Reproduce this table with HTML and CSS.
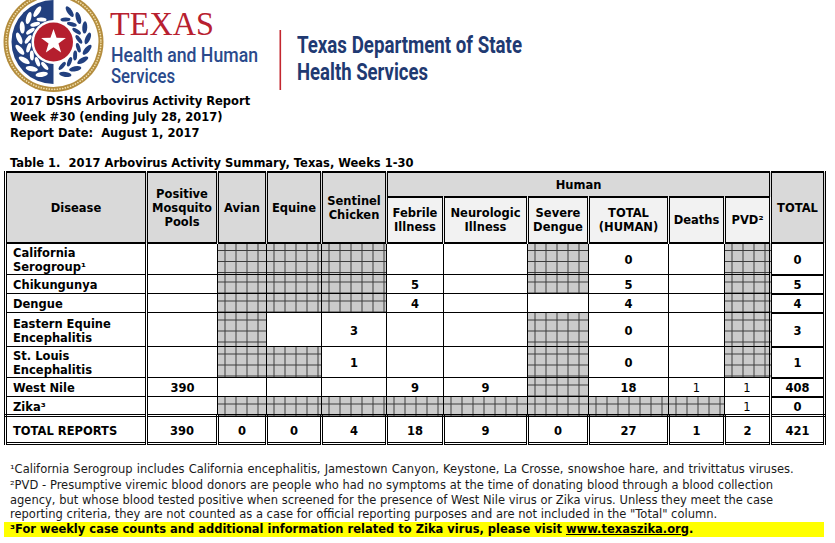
FILE: index.html
```html
<!DOCTYPE html>
<html>
<head>
<meta charset="utf-8">
<title>2017 DSHS Arbovirus Activity Report</title>
<link rel="stylesheet" href="styles.css">
</head>
<body>
<header class="brand">
<svg class="logo" width="540" height="93" viewBox="0 0 540 93">
  <defs>
    <g id="lf">
      <ellipse cx="19" cy="42" rx="6.2" ry="2.5" transform="rotate(62 19 42)"/>
      <ellipse cx="28" cy="42" rx="5" ry="2" transform="rotate(-60 28 42)"/>
    </g>
    <g id="laurel">
      <use href="#lf" transform="rotate(-70 53.5 42)"/>
      <use href="#lf" transform="rotate(-51 53.5 42)"/>
      <use href="#lf" transform="rotate(-32 53.5 42)"/>
      <use href="#lf" transform="rotate(-13 53.5 42)"/>
      <use href="#lf" transform="rotate(6 53.5 42)"/>
      <use href="#lf" transform="rotate(25 53.5 42)"/>
      <use href="#lf" transform="rotate(44 53.5 42)"/>
      <use href="#lf" transform="rotate(62 53.5 42)"/>
    </g>
  </defs>
  <circle cx="53.5" cy="42" r="50" fill="#b48d3e"/>
  <circle cx="53.5" cy="42" r="47.4" fill="none" stroke="#f1dfaa" stroke-width="1.7" stroke-dasharray="0.01 2.7" stroke-linecap="round"/>
  <circle cx="53.5" cy="42" r="45" fill="#fff"/>
  <path d="M53.5 0 A42 42 0 0 0 53.5 84 Z" fill="#22407f"/>
  <g fill="#fff"><use href="#laurel"/></g>
  <g fill="#22407f" transform="translate(107 0) scale(-1 1)"><use href="#laurel"/></g>
  <circle cx="53.5" cy="42" r="22" fill="#fff"/>
  <circle cx="53.5" cy="42" r="19.5" fill="#b51f2e"/>
  <path d="M53.5 29 L56.56 37.79 L65.86 37.98 L58.45 43.61 L61.14 52.52 L53.5 47.2 L45.86 52.52 L48.55 43.61 L41.14 37.98 L50.44 37.79 Z" fill="#fff"/>
  <text class="t-texas" x="110" y="35" textLength="104" lengthAdjust="spacingAndGlyphs">TEXAS</text>
  <text class="t-hhs" x="111" y="62" textLength="147" lengthAdjust="spacingAndGlyphs">Health and Human</text>
  <text class="t-hhs" x="111" y="83" textLength="64" lengthAdjust="spacingAndGlyphs">Services</text>
  <rect x="279.5" y="30" width="1.6" height="60" fill="#c3272f"/>
  <text class="t-dshs" x="297" y="53" textLength="225" lengthAdjust="spacingAndGlyphs">Texas Department of State</text>
  <text class="t-dshs" x="297" y="80" textLength="131" lengthAdjust="spacingAndGlyphs">Health Services</text>
</svg>
</header>

<section class="report-info">
  <p>2017 DSHS Arbovirus Activity Report</p>
  <p>Week #30 (ending July 28, 2017)</p>
  <p>Report Date:&nbsp; August 1, 2017</p>
</section>

<h2 class="table-title">Table 1.&nbsp; 2017 Arbovirus Activity Summary, Texas, Weeks 1-30</h2>

<table class="summary">
  <colgroup>
    <col class="w-disease"><col class="w-pools"><col class="w-avian"><col class="w-equine"><col class="w-chicken">
    <col class="w-febrile"><col class="w-neuro"><col class="w-severe"><col class="w-thuman"><col class="w-deaths"><col class="w-pvd"><col class="w-total">
  </colgroup>
  <thead>
    <tr class="hrow1">
      <th rowspan="2">Disease</th>
      <th rowspan="2">Positive<br>Mosquito<br>Pools</th>
      <th rowspan="2">Avian</th>
      <th rowspan="2">Equine</th>
      <th rowspan="2">Sentinel<br>Chicken</th>
      <th colspan="6" class="human">Human</th>
      <th rowspan="2" class="tot">TOTAL</th>
    </tr>
    <tr class="hrow2">
      <th class="sub">Febrile<br>Illness</th>
      <th class="sub">Neurologic<br>Illness</th>
      <th class="sub">Severe<br>Dengue</th>
      <th class="sub">TOTAL<br>(HUMAN)</th>
      <th class="sub">Deaths</th>
      <th class="sub">PVD²</th>
    </tr>
  </thead>
  <tbody>
    <tr class="r-cal">
      <td class="name">California<br>Serogroup¹</td><td></td>
      <td class="hatch"></td><td class="hatch"></td><td class="hatch"></td>
      <td></td><td></td><td class="hatch"></td><td>0</td><td></td><td class="hatch"></td><td class="tot">0</td>
    </tr>
    <tr class="r-chik">
      <td class="name">Chikungunya</td><td></td>
      <td class="hatch"></td><td class="hatch"></td><td class="hatch"></td>
      <td>5</td><td></td><td class="hatch"></td><td>5</td><td></td><td class="hatch"></td><td class="tot">5</td>
    </tr>
    <tr class="r-den">
      <td class="name">Dengue</td><td></td>
      <td class="hatch"></td><td class="hatch"></td><td class="hatch"></td>
      <td>4</td><td></td><td></td><td>4</td><td></td><td class="hatch"></td><td class="tot">4</td>
    </tr>
    <tr class="r-eee">
      <td class="name">Eastern Equine<br>Encephalitis</td><td></td>
      <td class="hatch"></td><td></td><td>3</td>
      <td></td><td></td><td class="hatch"></td><td>0</td><td></td><td class="hatch"></td><td class="tot">3</td>
    </tr>
    <tr class="r-sle">
      <td class="name">St. Louis<br>Encephalitis</td><td></td>
      <td class="hatch"></td><td class="hatch"></td><td>1</td>
      <td></td><td></td><td class="hatch"></td><td>0</td><td></td><td class="hatch"></td><td class="tot">1</td>
    </tr>
    <tr class="r-wn">
      <td class="name">West Nile</td><td>390</td>
      <td></td><td></td><td></td>
      <td>9</td><td>9</td><td class="hatch"></td><td>18</td><td class="thin">1</td><td class="thin">1</td><td class="tot">408</td>
    </tr>
    <tr class="r-zika">
      <td class="name">Zika³</td><td></td>
      <td class="hatch"></td><td class="hatch"></td><td class="hatch"></td>
      <td class="hatch"></td><td class="hatch"></td><td class="hatch"></td><td class="hatch"></td><td class="hatch"></td><td class="thin">1</td><td class="tot">0</td>
    </tr>
    <tr class="r-totals">
      <td class="name">TOTAL REPORTS</td><td>390</td>
      <td>0</td><td>0</td><td>4</td>
      <td>18</td><td>9</td><td>0</td><td>27</td><td>1</td><td>2</td><td class="tot">421</td>
    </tr>
  </tbody>
</table>

<section class="notes">
  <p class="note1">¹California Serogroup includes California encephalitis, Jamestown Canyon, Keystone, La Crosse, snowshoe hare, and trivittatus viruses.</p>
  <p class="note2">²PVD - Presumptive viremic blood donors are people who had no symptoms at the time of donating blood through a blood collection agency, but whose blood tested positive when screened for the presence of West Nile virus or Zika virus. Unless they meet the case reporting criteria, they are not counted as a case for official reporting purposes and are not included in the "Total" column.</p>
  <p class="note3">³For weekly case counts and additional information related to Zika virus, please visit <a class="link">www.texaszika.org</a>.</p>
</section>
</body>
</html>
```

FILE: styles.css
```css
* { box-sizing: border-box; }
html, body { margin: 0; padding: 0; background: #fff; }
body {
  font-family: "DejaVu Sans", Verdana, sans-serif;
  color: #000;
  width: 835px;
  height: 543px;
  overflow: hidden;
}

.brand { height: 93px; }
.logo { display: block; }
.t-texas { font-family: "Liberation Serif", serif; font-size: 33px; fill: #b8202f; }
.t-hhs { font-family: Roboto, "Liberation Sans", sans-serif; font-size: 20px; font-weight: 500; fill: #2a4a8c; }
.t-dshs { font-family: Roboto, "Liberation Sans", sans-serif; font-size: 23px; font-weight: 700; fill: #1f3a72; }

.report-info { padding-left: 10px; }
.report-info p { margin: 0; font-size: 11.5px; font-weight: bold; line-height: 16px; }
.table-title { margin: 14px 0 0 10px; font-size: 11.5px; font-weight: bold; line-height: 16px; }

.summary {
  margin-left: 4px;
  width: 819px;
  table-layout: fixed;
  border-collapse: collapse;
  font-size: 11.5px;
  font-weight: bold;
  border-left: 3px double #000;
  border-right: 3px double #000;
  border-top: 2px solid #000;
  border-bottom: 3px double #000;
}
.w-disease { width: 141px; }
.w-pools { width: 71px; }
.w-avian { width: 49px; }
.w-equine { width: 55px; }
.w-chicken { width: 65px; }
.w-febrile { width: 57px; }
.w-neuro { width: 84px; }
.w-severe { width: 61px; }
.w-thuman { width: 80px; }
.w-deaths { width: 56px; }
.w-pvd { width: 46px; }
.w-total { width: 54px; }

.summary th, .summary td {
  border: 1px solid #000;
  padding: 0;
  text-align: center;
  vertical-align: middle;
  line-height: 14px;
}
.summary th {
  background: #d9d9d9;
  border-left: 3px double #000;
  border-right: 3px double #000;
  border-bottom: 2px solid #000;
}
.summary th.sub { background: #f2f2f2; border-top: 2px solid #000; }
.hrow1 { height: 25px; }
.hrow2 { height: 46px; }

.summary tbody td { padding-top: 2px; }
.summary td.name { text-align: left; padding-left: 6px; border-right: 3px double #000; }
.summary td.tot { border-left: 3px double #000; border-bottom: 2px solid #000; }
.summary th.tot { border-left: 3px double #000; }
.summary td.thin { font-weight: normal; }
.summary td.hatch {
  background-color: #cbcbcb;
  background-image:
    linear-gradient(to right, #3c3c3c 1px, transparent 1px),
    linear-gradient(to bottom, #3c3c3c 1px, transparent 1px);
  background-size: 11px 11px;
  background-position: 6px 6px;
}
.r-cal { height: 29px; }
.r-chik { height: 19px; }
.r-den { height: 19px; }
.r-eee { height: 34px; }
.r-sle { height: 28px; }
.r-wn { height: 19px; }
.r-zika { height: 19px; }
.r-totals { height: 28px; }
.summary .r-totals td { border-top: 3px double #000; border-left: 3px double #000; border-right: 3px double #000; }

.notes { margin-top: 17px; color: #1a1a1a; }
.notes p { margin: 0; padding-left: 10px; }
.note1 { font-size: 11.5px; word-spacing: 0.5px; line-height: 15px; margin-bottom: 1px !important; white-space: nowrap; }
.note2 {
  font-size: 11.5px;
  line-height: 14.5px;
  width: 773px;
  text-align: justify;
}
.note3 {
  margin: 0 0 0 4px !important;
  padding-left: 6px !important;
  width: 820px;
  background: #ffff00;
  font-size: 11.5px;
  font-weight: bold;
  line-height: 15px;
  color: #000;
}
.link { color: #000; text-decoration: underline; }
```
